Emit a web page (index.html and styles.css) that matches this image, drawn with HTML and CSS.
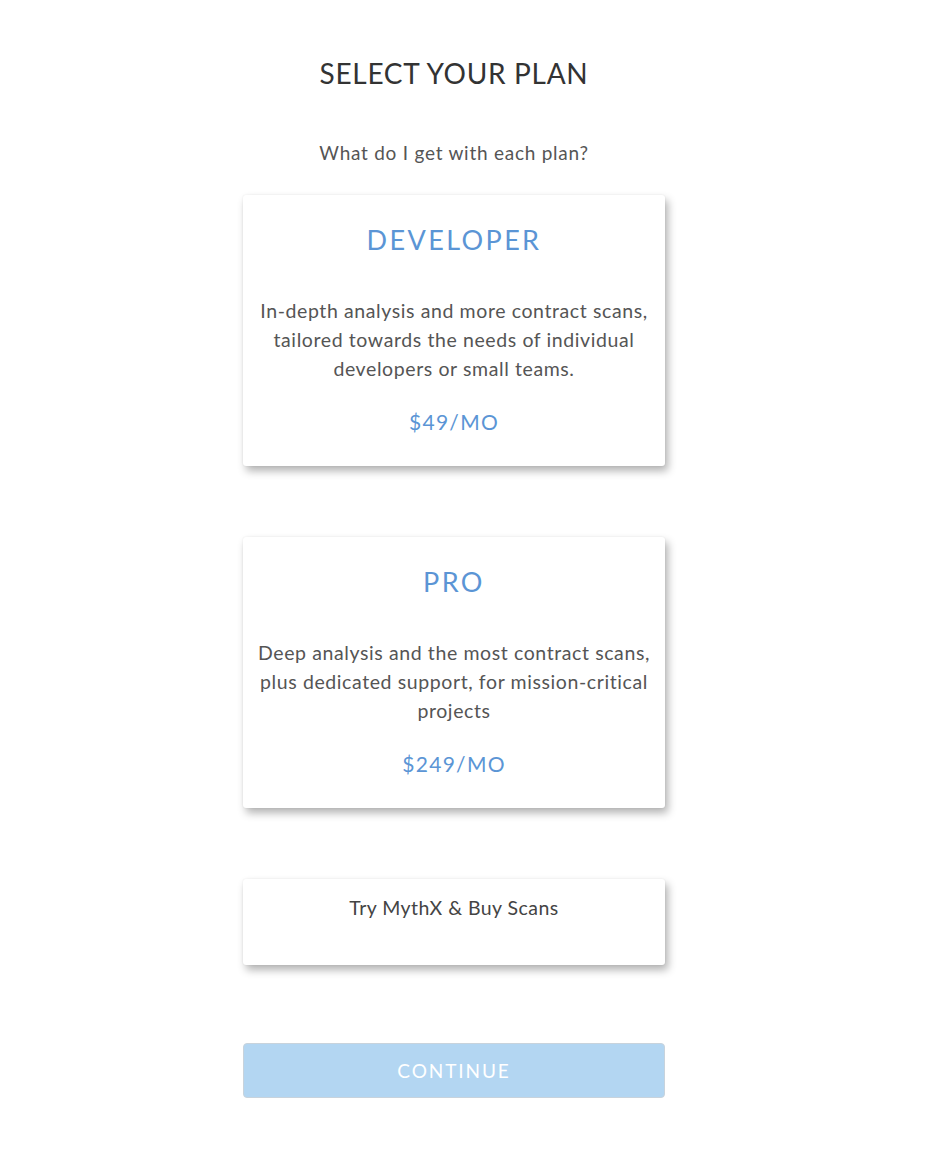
FILE: index.html
```html
<!DOCTYPE html>
<html lang="en">
<head>
<meta charset="utf-8">
<title>Select your plan</title>
<link rel="stylesheet" href="styles.css">
</head>
<body>
<main class="page">
  <h1 class="page-title">SELECT YOUR PLAN</h1>
  <p class="page-sub">What do I get with each plan?</p>

  <section class="plan-card">
    <h2 class="plan-name">DEVELOPER</h2>
    <p class="plan-desc">In-depth analysis and more contract scans, tailored towards the needs of individual developers or small teams.</p>
    <p class="plan-price">$49/MO</p>
  </section>

  <section class="plan-card">
    <h2 class="plan-name">PRO</h2>
    <p class="plan-desc">Deep analysis and the most contract scans, plus dedicated support, for mission-critical projects</p>
    <p class="plan-price">$249/MO</p>
  </section>

  <section class="plan-card plan-card--try">
    <p class="try-text">Try MythX &amp; Buy Scans</p>
  </section>

  <button class="continue-btn" type="button" disabled>CONTINUE</button>
</main>
</body>
</html>
```

FILE: styles.css
```css
html, body {
  margin: 0;
  padding: 0;
  background: #ffffff;
}

body {
  font-family: Lato, "Open Sans", "Liberation Sans", sans-serif;
  color: #555555;
}

.page {
  width: 422px;
  margin: 0 auto;
  padding: 56px 0 40px;
  position: relative;
  left: -18px;
  display: flex;
  flex-direction: column;
  align-items: stretch;
  text-align: center;
}

.page-title {
  margin: 0;
  font-size: 28px;
  line-height: 34px;
  font-weight: 400;
  letter-spacing: 0.7px;
  color: #333333;
}

.page-sub {
  margin: 51px 0 0;
  font-size: 19px;
  line-height: 24px;
  letter-spacing: 0.75px;
  color: #555555;
}

.plan-card {
  margin-top: 30px;
  background: #ffffff;
  border-radius: 3px;
  box-shadow: 3px 5px 9px rgba(0, 0, 0, 0.3), 0 0 2px rgba(0, 0, 0, 0.08);
  padding: 29px 8px 32px;
}

.plan-card + .plan-card {
  margin-top: 71px;
}

.plan-name {
  margin: 0;
  font-size: 27px;
  line-height: 31px;
  font-weight: 400;
  letter-spacing: 2.4px;
  color: #5b95d5;
}

.plan-desc {
  margin: 41px 0 0;
  font-size: 19.5px;
  line-height: 29px;
  letter-spacing: 0.6px;
  color: #555555;
}

.plan-price {
  margin: 27px 0 0;
  font-size: 21px;
  line-height: 24px;
  letter-spacing: 1.3px;
  color: #5b95d5;
}

.plan-card--try {
  padding: 14px 8px 43px;
}

.try-text {
  margin: 0;
  font-size: 19.5px;
  line-height: 29px;
  letter-spacing: 0.45px;
  color: #444444;
}

.continue-btn {
  margin-top: 78px;
  height: 55px;
  width: 100%;
  border: 1px solid #c8d3dc;
  border-radius: 4px;
  background: #b3d6f2;
  color: #ffffff;
  font-family: inherit;
  font-size: 19px;
  letter-spacing: 1.9px;
  cursor: default;
}
```
